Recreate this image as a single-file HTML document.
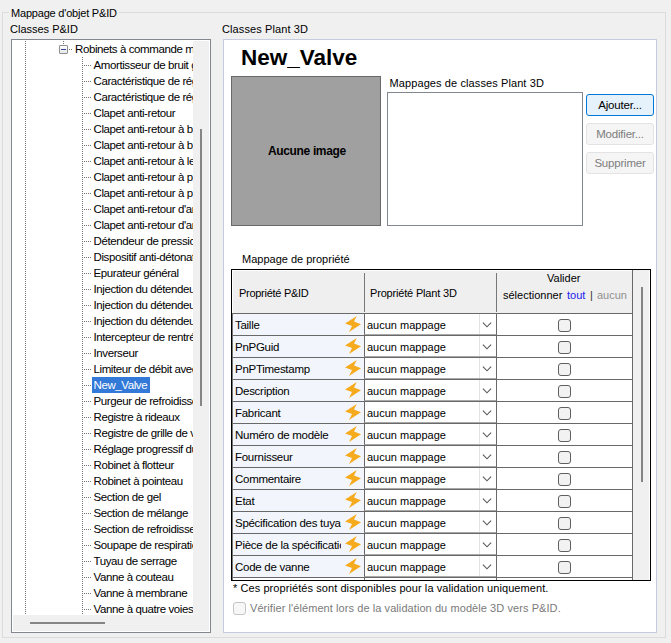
<!DOCTYPE html><html><head><meta charset="utf-8"><style>*{margin:0;padding:0;box-sizing:border-box}
html,body{width:671px;height:643px;overflow:hidden;background:#f0f0f0;font-family:"Liberation Sans",sans-serif;font-size:11px;color:#000;position:relative}
div{position:absolute}
.lbl{white-space:nowrap;line-height:14px}
.gb{left:2px;top:12px;width:664px;height:626px;border:1px solid #dcdcdc}
.gbl{left:9px;top:6px;letter-spacing:-0.2px;padding:0 2px;background:#f0f0f0;line-height:14px;white-space:nowrap}
.tree{left:11px;top:39px;width:200px;height:594px;border:1px solid #828790;background:#fff}
.tclip{left:1px;top:1px;width:181px;height:575px;overflow:hidden}
.vdots{width:1px;background:repeating-linear-gradient(to bottom,#777 0,#777 1px,transparent 1px,transparent 2px)}
.hdots{height:1px;background:repeating-linear-gradient(to right,#777 0,#777 1px,transparent 1px,transparent 2px)}
.ebox{left:46px;top:4px;width:9px;height:9px;border:1px solid #8f8f8f;border-radius:1px;background:linear-gradient(#fff,#e6e6e6)}
.eminus{left:1px;top:3px;width:5px;height:1px;background:#33449c}
.trow{height:16px;line-height:16px;white-space:nowrap;padding:0 3px 0 2px;font-size:11.5px;letter-spacing:-0.4px}
.trow.sel{background:#3279d8;color:#fff}
.vsb{left:181px;top:1px;width:16px;height:574px;background:#f0f0f0}
.vth{left:7px;top:88px;width:2px;height:277px;background:#858585}
.hsb{left:1px;top:575px;width:180px;height:16px;background:#f0f0f0}
.hth{left:17px;top:7px;width:75px;height:2px;background:#858585}
.corner{left:181px;top:575px;width:16px;height:16px;background:#f0f0f0}
.panel{left:223px;top:39px;width:434px;height:594px;border:1px solid #c6cbe0;background:#fff}
.title{left:17px;top:5px;font-size:22.5px;font-weight:bold;line-height:26px;white-space:nowrap}
.img{left:7px;top:36px;width:150px;height:150px;background:#a0a0a0;border:1px solid #696969}
.img span{position:absolute;left:36px;top:67px;font-weight:bold;font-size:12px;letter-spacing:-0.35px;line-height:14px;white-space:nowrap}
.lst{left:163px;top:52px;width:196px;height:134px;border:1px solid #828790;background:#fff}
.btn{left:362px;width:68px;height:22px;border-radius:3px;text-align:center;line-height:20px;font-size:11.5px;letter-spacing:-0.2px;white-space:nowrap}
.btn.def{background:#e5f1fb;border:1px solid #0078d7}
.btn.dis{background:#f5f5f5;border:1px solid #e3e3e3;color:#7d7d7d}
.grid{left:7px;top:229px;width:420px;height:312px;border:1px solid #000;background:#fff;overflow:hidden}
.ghdr{left:0;top:0;width:400px;height:43px;background:#efefef;border-left:1px solid #fff;border-top:1px solid #fff}
.hsep{top:2px;width:1px;height:39px;background:#777}
.hc1{left:6px;top:15px;letter-spacing:-0.28px;line-height:14px;white-space:nowrap}
.hc2{left:137px;top:15px;letter-spacing:-0.18px;line-height:14px;white-space:nowrap}

.hc3{line-height:16px;white-space:nowrap}
.lnk{color:#2020f0}
.gry{color:#8f8f8f}
.grow{left:0;width:400px;height:22px;border-top:1px solid #696969;border-left:1px solid #777}
.c1{left:0;top:0;width:131px;height:21px;background:#f2f6fc;line-height:21px;padding-left:3px;white-space:nowrap;overflow:hidden}
.bolt{left:112px;top:2px;width:16px;height:17px}
.combo{left:131px;top:0;width:132px;height:21px;border-left:1px solid #696969;border-bottom:1px solid #a8a8a8;background:#fff}
.combo span{position:absolute;left:2px;top:1px;line-height:21px;white-space:nowrap}
.csep{left:114px;top:0;width:1px;height:20px;background:#e3e3e3}
.chev{position:absolute;left:117px;top:8px}
.cb{left:325px;top:5px;width:13px;height:13px;border:1px solid #5f5f5f;border-radius:3px;background:#f2f2f2}
.grow::after{content:"";position:absolute;left:263px;top:-1px;width:1px;height:22px;background:#696969}
.gsb{left:400px;top:0;width:17px;height:310px;background:#f0f0f0;border-left:1px solid #696969}
.gth{left:8px;top:17px;width:2px;height:195px;background:#858585}
.dcb{left:9px;top:562px;width:13px;height:13px;border:1px solid #c5c5c5;border-radius:3px;background:#f7f7f7}
.dtx{color:#7a7a7a}
.c1 span{position:absolute;left:2px;top:1px;width:106px;overflow:hidden;font-size:11.5px;letter-spacing:-0.28px}
.foot{letter-spacing:0.075px}
</style></head><body>
<div class="gb"></div><div class="gbl">Mappage d'objet P&amp;ID</div>
<div class="lbl" style="left:10px;top:22px">Classes P&amp;ID</div>
<div class="lbl" style="left:222px;top:22px;letter-spacing:0.1px">Classes Plant 3D</div>
<div class="tree">
<div class="tclip">
<div class="vdots" style="left:12px;top:0;height:574px"></div>
<div class="vdots" style="left:50px;top:0;height:4px"></div>
<div class="vdots" style="left:69px;top:16px;height:558px"></div>
<div class="ebox"><div class="eminus"></div></div>
<div class="hdots" style="left:56px;top:8px;width:4px"></div>
<div class="trow" style="left:60px;top:0">Robinets à commande manuelle</div>
<div class="hdots" style="left:71px;top:24px;width:8px"></div>
<div class="trow" style="left:78.5px;top:16px">Amortisseur de bruit gaz</div>
<div class="hdots" style="left:71px;top:40px;width:8px"></div>
<div class="trow" style="left:78.5px;top:32px">Caractéristique de réglage</div>
<div class="hdots" style="left:71px;top:56px;width:8px"></div>
<div class="trow" style="left:78.5px;top:48px">Caractéristique de réglage 2</div>
<div class="hdots" style="left:71px;top:72px;width:8px"></div>
<div class="trow" style="left:78.5px;top:64px">Clapet anti-retour</div>
<div class="hdots" style="left:71px;top:88px;width:8px"></div>
<div class="trow" style="left:78.5px;top:80px">Clapet anti-retour à battant</div>
<div class="hdots" style="left:71px;top:104px;width:8px"></div>
<div class="trow" style="left:78.5px;top:96px">Clapet anti-retour à bille</div>
<div class="hdots" style="left:71px;top:120px;width:8px"></div>
<div class="trow" style="left:78.5px;top:112px">Clapet anti-retour à levée</div>
<div class="hdots" style="left:71px;top:136px;width:8px"></div>
<div class="trow" style="left:78.5px;top:128px">Clapet anti-retour à piston</div>
<div class="hdots" style="left:71px;top:152px;width:8px"></div>
<div class="trow" style="left:78.5px;top:144px">Clapet anti-retour à papillon</div>
<div class="hdots" style="left:71px;top:168px;width:8px"></div>
<div class="trow" style="left:78.5px;top:160px">Clapet anti-retour d'angle</div>
<div class="hdots" style="left:71px;top:184px;width:8px"></div>
<div class="trow" style="left:78.5px;top:176px">Clapet anti-retour d'arrêt</div>
<div class="hdots" style="left:71px;top:200px;width:8px"></div>
<div class="trow" style="left:78.5px;top:192px">Détendeur de pression</div>
<div class="hdots" style="left:71px;top:216px;width:8px"></div>
<div class="trow" style="left:78.5px;top:208px">Dispositif anti-détonation</div>
<div class="hdots" style="left:71px;top:232px;width:8px"></div>
<div class="trow" style="left:78.5px;top:224px">Epurateur général</div>
<div class="hdots" style="left:71px;top:248px;width:8px"></div>
<div class="trow" style="left:78.5px;top:240px">Injection du détendeur</div>
<div class="hdots" style="left:71px;top:264px;width:8px"></div>
<div class="trow" style="left:78.5px;top:256px">Injection du détendeur 2</div>
<div class="hdots" style="left:71px;top:280px;width:8px"></div>
<div class="trow" style="left:78.5px;top:272px">Injection du détendeur 3</div>
<div class="hdots" style="left:71px;top:296px;width:8px"></div>
<div class="trow" style="left:78.5px;top:288px">Intercepteur de rentrée</div>
<div class="hdots" style="left:71px;top:312px;width:8px"></div>
<div class="trow" style="left:78.5px;top:304px">Inverseur</div>
<div class="hdots" style="left:71px;top:328px;width:8px"></div>
<div class="trow" style="left:78.5px;top:320px">Limiteur de débit avec</div>
<div class="hdots" style="left:71px;top:344px;width:8px"></div>
<div class="trow sel" style="left:78.5px;top:336px">New_Valve</div>
<div class="hdots" style="left:71px;top:360px;width:8px"></div>
<div class="trow" style="left:78.5px;top:352px">Purgeur de refroidissement</div>
<div class="hdots" style="left:71px;top:376px;width:8px"></div>
<div class="trow" style="left:78.5px;top:368px">Registre à rideaux</div>
<div class="hdots" style="left:71px;top:392px;width:8px"></div>
<div class="trow" style="left:78.5px;top:384px">Registre de grille de ventilation</div>
<div class="hdots" style="left:71px;top:408px;width:8px"></div>
<div class="trow" style="left:78.5px;top:400px">Réglage progressif du débit</div>
<div class="hdots" style="left:71px;top:424px;width:8px"></div>
<div class="trow" style="left:78.5px;top:416px">Robinet à flotteur</div>
<div class="hdots" style="left:71px;top:440px;width:8px"></div>
<div class="trow" style="left:78.5px;top:432px">Robinet à pointeau</div>
<div class="hdots" style="left:71px;top:456px;width:8px"></div>
<div class="trow" style="left:78.5px;top:448px">Section de gel</div>
<div class="hdots" style="left:71px;top:472px;width:8px"></div>
<div class="trow" style="left:78.5px;top:464px">Section de mélange</div>
<div class="hdots" style="left:71px;top:488px;width:8px"></div>
<div class="trow" style="left:78.5px;top:480px">Section de refroidissement</div>
<div class="hdots" style="left:71px;top:504px;width:8px"></div>
<div class="trow" style="left:78.5px;top:496px">Soupape de respiration</div>
<div class="hdots" style="left:71px;top:520px;width:8px"></div>
<div class="trow" style="left:78.5px;top:512px">Tuyau de serrage</div>
<div class="hdots" style="left:71px;top:536px;width:8px"></div>
<div class="trow" style="left:78.5px;top:528px">Vanne à couteau</div>
<div class="hdots" style="left:71px;top:552px;width:8px"></div>
<div class="trow" style="left:78.5px;top:544px">Vanne à membrane</div>
<div class="hdots" style="left:71px;top:568px;width:8px"></div>
<div class="trow" style="left:78.5px;top:560px">Vanne à quatre voies</div>
</div>
<div class="vsb"><div class="vth"></div></div>
<div class="hsb"><div class="hth"></div></div>
<div class="corner"></div>
</div>
<div class="panel">
<div class="title">New_Valve</div>
<div class="img"><span>Aucune image</span></div>
<div class="lbl" style="left:165.5px;top:36px;letter-spacing:0.1px">Mappages de classes Plant 3D</div>
<div class="lst"></div>
<div class="btn def" style="top:54px">Ajouter...</div>
<div class="btn dis" style="top:83px">Modifier...</div>
<div class="btn dis" style="top:112px">Supprimer</div>
<div class="lbl" style="left:18px;top:212px">Mappage de propriété</div>
<div class="grid">
<div class="ghdr"><div class="hc1">Propriété P&amp;ID</div><div class="hsep" style="left:131px"></div><div class="hc2">Propriété Plant 3D</div><div class="hsep" style="left:263px"></div><div class="hc3" style="left:314px;top:-1px">Valider</div><div class="hc3" style="left:270px;top:16px">sélectionner</div><div class="hc3 lnk" style="left:334px;top:16px">tout</div><div class="hc3" style="left:357px;top:16px;color:#333">|</div><div class="hc3 gry" style="left:364px;top:16px">aucun</div><div class="hsep" style="left:399px"></div></div>
<div class="grow" style="top:43px"><div class="c1"><span>Taille</span></div><div class="bolt"><svg width="16" height="17" viewBox="0 0 16 17"><path d="M11.8 0 L0 7.4 L7.0 10.0 L4.0 16.0 L16 8.2 L9.0 5.4 Z" fill="#f6aa1e"/></svg></div><div class="combo"><span>aucun mappage</span><div class="csep"></div><svg class="chev" width="10" height="6" viewBox="0 0 10 6"><path d="M0.9 0.7 L5 4.8 L9.1 0.7" fill="none" stroke="#5a5a5a" stroke-width="1.15"/></svg></div><div class="cb"></div></div>
<div class="grow" style="top:65px"><div class="c1"><span>PnPGuid</span></div><div class="bolt"><svg width="16" height="17" viewBox="0 0 16 17"><path d="M11.8 0 L0 7.4 L7.0 10.0 L4.0 16.0 L16 8.2 L9.0 5.4 Z" fill="#f6aa1e"/></svg></div><div class="combo"><span>aucun mappage</span><div class="csep"></div><svg class="chev" width="10" height="6" viewBox="0 0 10 6"><path d="M0.9 0.7 L5 4.8 L9.1 0.7" fill="none" stroke="#5a5a5a" stroke-width="1.15"/></svg></div><div class="cb"></div></div>
<div class="grow" style="top:87px"><div class="c1"><span>PnPTimestamp</span></div><div class="bolt"><svg width="16" height="17" viewBox="0 0 16 17"><path d="M11.8 0 L0 7.4 L7.0 10.0 L4.0 16.0 L16 8.2 L9.0 5.4 Z" fill="#f6aa1e"/></svg></div><div class="combo"><span>aucun mappage</span><div class="csep"></div><svg class="chev" width="10" height="6" viewBox="0 0 10 6"><path d="M0.9 0.7 L5 4.8 L9.1 0.7" fill="none" stroke="#5a5a5a" stroke-width="1.15"/></svg></div><div class="cb"></div></div>
<div class="grow" style="top:109px"><div class="c1"><span>Description</span></div><div class="bolt"><svg width="16" height="17" viewBox="0 0 16 17"><path d="M11.8 0 L0 7.4 L7.0 10.0 L4.0 16.0 L16 8.2 L9.0 5.4 Z" fill="#f6aa1e"/></svg></div><div class="combo"><span>aucun mappage</span><div class="csep"></div><svg class="chev" width="10" height="6" viewBox="0 0 10 6"><path d="M0.9 0.7 L5 4.8 L9.1 0.7" fill="none" stroke="#5a5a5a" stroke-width="1.15"/></svg></div><div class="cb"></div></div>
<div class="grow" style="top:131px"><div class="c1"><span>Fabricant</span></div><div class="bolt"><svg width="16" height="17" viewBox="0 0 16 17"><path d="M11.8 0 L0 7.4 L7.0 10.0 L4.0 16.0 L16 8.2 L9.0 5.4 Z" fill="#f6aa1e"/></svg></div><div class="combo"><span>aucun mappage</span><div class="csep"></div><svg class="chev" width="10" height="6" viewBox="0 0 10 6"><path d="M0.9 0.7 L5 4.8 L9.1 0.7" fill="none" stroke="#5a5a5a" stroke-width="1.15"/></svg></div><div class="cb"></div></div>
<div class="grow" style="top:153px"><div class="c1"><span>Numéro de modèle</span></div><div class="bolt"><svg width="16" height="17" viewBox="0 0 16 17"><path d="M11.8 0 L0 7.4 L7.0 10.0 L4.0 16.0 L16 8.2 L9.0 5.4 Z" fill="#f6aa1e"/></svg></div><div class="combo"><span>aucun mappage</span><div class="csep"></div><svg class="chev" width="10" height="6" viewBox="0 0 10 6"><path d="M0.9 0.7 L5 4.8 L9.1 0.7" fill="none" stroke="#5a5a5a" stroke-width="1.15"/></svg></div><div class="cb"></div></div>
<div class="grow" style="top:175px"><div class="c1"><span>Fournisseur</span></div><div class="bolt"><svg width="16" height="17" viewBox="0 0 16 17"><path d="M11.8 0 L0 7.4 L7.0 10.0 L4.0 16.0 L16 8.2 L9.0 5.4 Z" fill="#f6aa1e"/></svg></div><div class="combo"><span>aucun mappage</span><div class="csep"></div><svg class="chev" width="10" height="6" viewBox="0 0 10 6"><path d="M0.9 0.7 L5 4.8 L9.1 0.7" fill="none" stroke="#5a5a5a" stroke-width="1.15"/></svg></div><div class="cb"></div></div>
<div class="grow" style="top:197px"><div class="c1"><span>Commentaire</span></div><div class="bolt"><svg width="16" height="17" viewBox="0 0 16 17"><path d="M11.8 0 L0 7.4 L7.0 10.0 L4.0 16.0 L16 8.2 L9.0 5.4 Z" fill="#f6aa1e"/></svg></div><div class="combo"><span>aucun mappage</span><div class="csep"></div><svg class="chev" width="10" height="6" viewBox="0 0 10 6"><path d="M0.9 0.7 L5 4.8 L9.1 0.7" fill="none" stroke="#5a5a5a" stroke-width="1.15"/></svg></div><div class="cb"></div></div>
<div class="grow" style="top:219px"><div class="c1"><span>Etat</span></div><div class="bolt"><svg width="16" height="17" viewBox="0 0 16 17"><path d="M11.8 0 L0 7.4 L7.0 10.0 L4.0 16.0 L16 8.2 L9.0 5.4 Z" fill="#f6aa1e"/></svg></div><div class="combo"><span>aucun mappage</span><div class="csep"></div><svg class="chev" width="10" height="6" viewBox="0 0 10 6"><path d="M0.9 0.7 L5 4.8 L9.1 0.7" fill="none" stroke="#5a5a5a" stroke-width="1.15"/></svg></div><div class="cb"></div></div>
<div class="grow" style="top:241px"><div class="c1"><span>Spécification des tuyauteries</span></div><div class="bolt"><svg width="16" height="17" viewBox="0 0 16 17"><path d="M11.8 0 L0 7.4 L7.0 10.0 L4.0 16.0 L16 8.2 L9.0 5.4 Z" fill="#f6aa1e"/></svg></div><div class="combo"><span>aucun mappage</span><div class="csep"></div><svg class="chev" width="10" height="6" viewBox="0 0 10 6"><path d="M0.9 0.7 L5 4.8 L9.1 0.7" fill="none" stroke="#5a5a5a" stroke-width="1.15"/></svg></div><div class="cb"></div></div>
<div class="grow" style="top:263px"><div class="c1"><span>Pièce de la spécification</span></div><div class="bolt"><svg width="16" height="17" viewBox="0 0 16 17"><path d="M11.8 0 L0 7.4 L7.0 10.0 L4.0 16.0 L16 8.2 L9.0 5.4 Z" fill="#f6aa1e"/></svg></div><div class="combo"><span>aucun mappage</span><div class="csep"></div><svg class="chev" width="10" height="6" viewBox="0 0 10 6"><path d="M0.9 0.7 L5 4.8 L9.1 0.7" fill="none" stroke="#5a5a5a" stroke-width="1.15"/></svg></div><div class="cb"></div></div>
<div class="grow" style="top:285px"><div class="c1"><span>Code de vanne</span></div><div class="bolt"><svg width="16" height="17" viewBox="0 0 16 17"><path d="M11.8 0 L0 7.4 L7.0 10.0 L4.0 16.0 L16 8.2 L9.0 5.4 Z" fill="#f6aa1e"/></svg></div><div class="combo"><span>aucun mappage</span><div class="csep"></div><svg class="chev" width="10" height="6" viewBox="0 0 10 6"><path d="M0.9 0.7 L5 4.8 L9.1 0.7" fill="none" stroke="#5a5a5a" stroke-width="1.15"/></svg></div><div class="cb"></div></div>
<div style="left:0;top:307px;width:400px;height:1px;background:#696969"></div><div style="left:0;top:307px;width:1px;height:3px;background:#777"></div><div style="left:132px;top:307px;width:1px;height:3px;background:#696969"></div><div style="left:264px;top:307px;width:1px;height:3px;background:#696969"></div>
<div class="gsb"><div class="gth"></div></div>
</div>
<div class="lbl foot" style="left:9px;top:541px">* Ces propriétés sont disponibles pour la validation uniquement.</div>
<div class="dcb"></div><div class="lbl dtx foot" style="left:26px;top:561px">Vérifier l'élément lors de la validation du modèle 3D vers P&amp;ID.</div>
</div>
</body></html>
